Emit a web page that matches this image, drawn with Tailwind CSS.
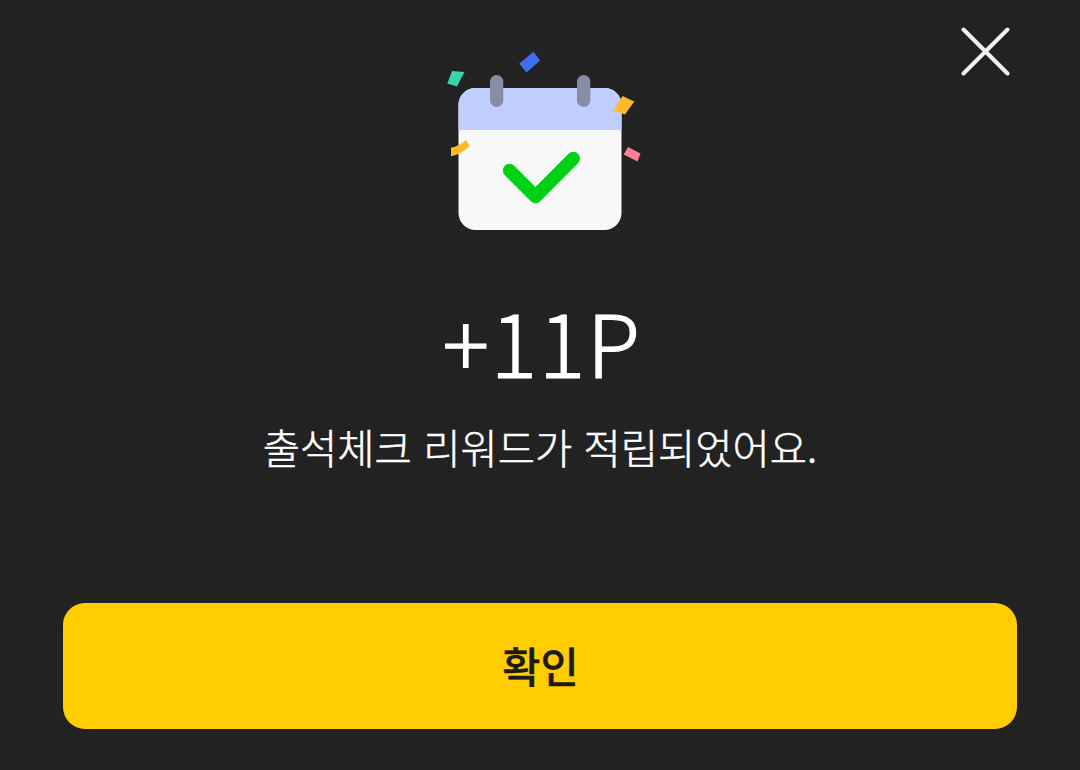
<!DOCTYPE html>
<html lang="ko">
<head>
    <meta charset="UTF-8">
    <meta name="viewport" content="width=device-width, initial-scale=1.0">
    <title>출석체크</title>
    <script src="https://cdn.jsdelivr.net/npm/@tailwindcss/browser@4"></script>
</head>
<body class="bg-[#222222] text-white font-['Noto_Sans_CJK_KR',sans-serif]">
    <main class="relative flex flex-col items-center w-[1080px] h-[770px] px-[63px] pt-10 overflow-hidden">
        <!-- 닫기 -->
        <button class="absolute top-[27px] right-[70px]" aria-label="닫기">
            <svg class="block w-[49px] h-[49px]" viewBox="0 0 49 49" fill="none" stroke="#f2f2f2" stroke-width="4" stroke-linecap="round">
                <path d="M2.5 2.5 46.5 46.5M46.5 2.5 2.5 46.5"/>
            </svg>
        </button>

        <!-- 달력 -->
        <svg class="block w-[210px] h-[200px] shrink-0" viewBox="435 40 210 200">
            <rect x="458.500" y="88" width="163" height="142" rx="17" fill="#f8f8f8"/>
            <path d="M458.500 130V105a17 17 0 0 1 17-17h129a17 17 0 0 1 17 17v25z" fill="#c0cdff"/>
            <rect x="490" y="75" width="13.300" height="32" rx="6.600" fill="#888da5"/>
            <rect x="577" y="75" width="13.300" height="32" rx="6.600" fill="#888da5"/>
            <path d="M509.500 170.500 535.500 196.500 573.300 158.500" fill="none" stroke="#00d116" stroke-width="13.300" stroke-linecap="round" stroke-linejoin="round"/>
            <path d="M452 71 464.500 72 457 86.500 447.300 83.500z" fill="#36d6ad"/>
            <path d="M519.300 63.500 533.500 51.800 540 60.500 526.500 72.500z" fill="#426cf0"/>
            <path d="M622.500 96 634.300 101.500 625 114.500 613.500 110.500z" fill="#ffb827"/>
            <path d="M628 147 640.500 153.500 637.500 161.500 623.700 154.500z" fill="#ff7d97"/>
            <path d="M451 147.800Q459 146 466 140L469.800 146Q462 154 451 156.200z" fill="#ffb827"/>
        </svg>

        <h1 class="mt-[35px] pl-[4px] h-[130px] text-[87px] leading-[130px] tracking-[1.500px] font-light [-webkit-text-stroke:1.200px_white]">+11P</h1>
        <p class="mt-[10px] h-[64px] text-[40.500px] leading-[64px] font-light [-webkit-text-stroke:0.500px_white]">출석체크 리워드가 적립되었어요.</p>
        <button class="mt-[124px] w-full h-[126px] pb-[1px] pl-[1px] shrink-0 rounded-[22px] bg-[#ffcd00] text-[#1c1a14] text-[41.500px] font-medium [-webkit-text-stroke:0.400px_#1c1a14]">확인</button>
    </main>
</body>
</html>
